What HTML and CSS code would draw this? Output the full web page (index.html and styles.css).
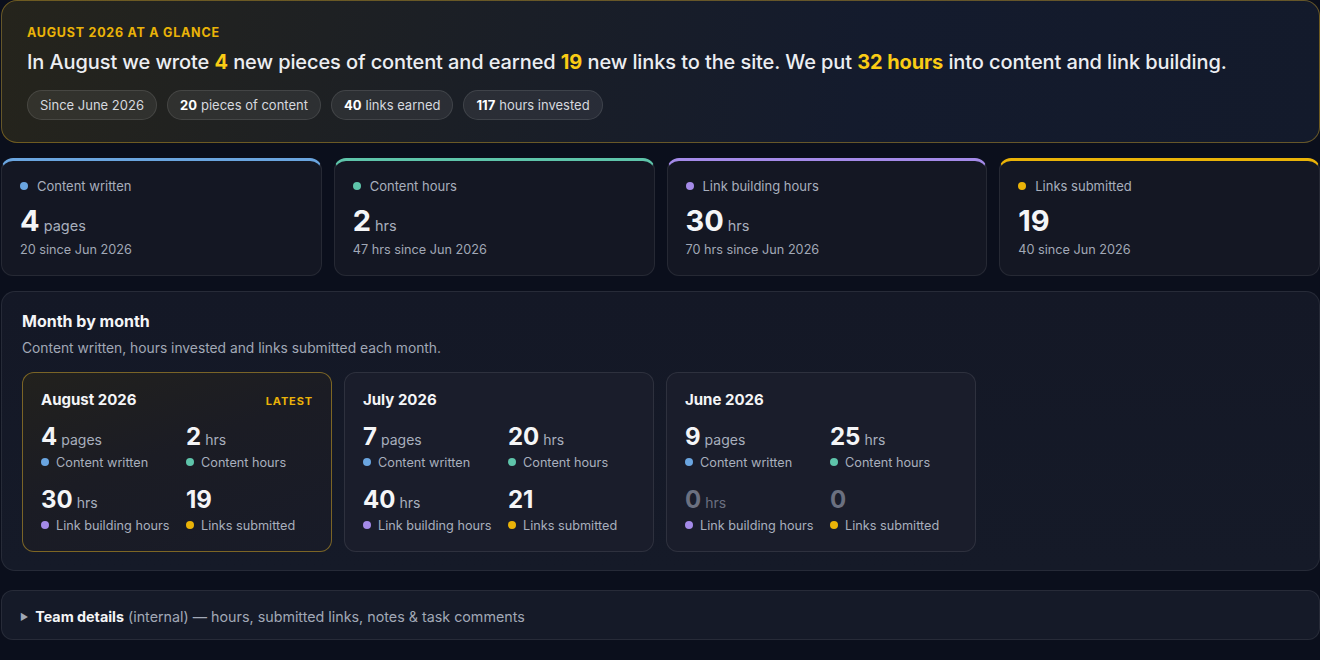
FILE: index.html
```html
<!DOCTYPE html>
<html lang="en">
<head>
<meta charset="utf-8">
<title>August 2026 at a glance</title>
<link rel="stylesheet" href="styles.css">
</head>
<body>
<main class="page">
  <section class="hero">
    <div class="eyebrow">August 2026 at a glance</div>
    <p class="summary">In August we wrote <b>4</b> new pieces of content and earned <b>19</b> new links to the site. We put <b>32 hours</b> into content and link building.</p>
    <div class="pills">
      <span class="pill">Since June 2026</span>
      <span class="pill"><b>20</b> pieces of content</span>
      <span class="pill"><b>40</b> links earned</span>
      <span class="pill"><b>117</b> hours invested</span>
    </div>
  </section>

  <section class="stats">
    <div class="stat blue">
      <div class="stat-label"><i class="dot"></i>Content written</div>
      <div class="stat-value">4<span class="unit">pages</span></div>
      <div class="stat-sub">20 since Jun 2026</div>
    </div>
    <div class="stat teal">
      <div class="stat-label"><i class="dot"></i>Content hours</div>
      <div class="stat-value">2<span class="unit">hrs</span></div>
      <div class="stat-sub">47 hrs since Jun 2026</div>
    </div>
    <div class="stat purple">
      <div class="stat-label"><i class="dot"></i>Link building hours</div>
      <div class="stat-value">30<span class="unit">hrs</span></div>
      <div class="stat-sub">70 hrs since Jun 2026</div>
    </div>
    <div class="stat yellow">
      <div class="stat-label"><i class="dot"></i>Links submitted</div>
      <div class="stat-value">19</div>
      <div class="stat-sub">40 since Jun 2026</div>
    </div>
  </section>

  <section class="months">
    <h2 class="months-title">Month by month</h2>
    <p class="months-sub">Content written, hours invested and links submitted each month.</p>
    <div class="month-grid">
      <div class="month latest">
        <div class="month-head"><span class="month-name">August 2026</span><span class="badge">Latest</span></div>
        <div class="metrics">
          <div class="metric"><div class="m-val">4<span class="unit">pages</span></div><div class="m-label blue"><i class="dot"></i>Content written</div></div>
          <div class="metric"><div class="m-val">2<span class="unit">hrs</span></div><div class="m-label teal"><i class="dot"></i>Content hours</div></div>
          <div class="metric"><div class="m-val">30<span class="unit">hrs</span></div><div class="m-label purple"><i class="dot"></i>Link building hours</div></div>
          <div class="metric"><div class="m-val">19</div><div class="m-label yellow"><i class="dot"></i>Links submitted</div></div>
        </div>
      </div>
      <div class="month">
        <div class="month-head"><span class="month-name">July 2026</span></div>
        <div class="metrics">
          <div class="metric"><div class="m-val">7<span class="unit">pages</span></div><div class="m-label blue"><i class="dot"></i>Content written</div></div>
          <div class="metric"><div class="m-val">20<span class="unit">hrs</span></div><div class="m-label teal"><i class="dot"></i>Content hours</div></div>
          <div class="metric"><div class="m-val">40<span class="unit">hrs</span></div><div class="m-label purple"><i class="dot"></i>Link building hours</div></div>
          <div class="metric"><div class="m-val">21</div><div class="m-label yellow"><i class="dot"></i>Links submitted</div></div>
        </div>
      </div>
      <div class="month">
        <div class="month-head"><span class="month-name">June 2026</span></div>
        <div class="metrics">
          <div class="metric"><div class="m-val">9<span class="unit">pages</span></div><div class="m-label blue"><i class="dot"></i>Content written</div></div>
          <div class="metric"><div class="m-val">25<span class="unit">hrs</span></div><div class="m-label teal"><i class="dot"></i>Content hours</div></div>
          <div class="metric"><div class="m-val zero">0<span class="unit">hrs</span></div><div class="m-label purple"><i class="dot"></i>Link building hours</div></div>
          <div class="metric"><div class="m-val zero">0</div><div class="m-label yellow"><i class="dot"></i>Links submitted</div></div>
        </div>
      </div>
    </div>
  </section>

  <details class="team">
    <summary><span class="tri">&#9654;</span><b>Team details</b> (internal) — hours, submitted links, notes &amp; task comments</summary>
  </details>
</main>
</body>
</html>
```

FILE: styles.css
```css
* { box-sizing: border-box; }
html, body { margin: 0; padding: 0; }
body {
  background: #0b0f1c;
  font-family: Inter, "Noto Sans", sans-serif;
  color: #e5e7eb;
  overflow: hidden;
}
.page {
  width: 1319px;
  margin-left: 1px;
  display: flex;
  flex-direction: column;
}

/* hero */
.hero {
  height: 143px;
  padding: 24px 25px 0;
  border: 1px solid rgba(202, 160, 40, 0.45);
  border-radius: 16px;
  background: linear-gradient(100deg, #25241c 0%, #1b1f26 35%, #141b2d 65%, #131a2b 100%);
}
.eyebrow {
  font-size: 12.5px;
  font-weight: 700;
  letter-spacing: 0.06em;
  text-transform: uppercase;
  color: #eab308;
  line-height: 16px;
}
.summary {
  margin: 7px 0 0;
  font-size: 20px;
  font-weight: 500;
  line-height: 28px;
  color: #eceef2;
  letter-spacing: -0.1px;
}
.summary b { color: #facc15; font-weight: 700; }
.pills { display: flex; gap: 10px; margin-top: 14px; }
.pill {
  height: 30px;
  padding: 0 12px;
  display: inline-flex;
  align-items: center;
  border-radius: 999px;
  background: rgba(255, 255, 255, 0.07);
  border: 1px solid rgba(255, 255, 255, 0.1);
  font-size: 13px;
  color: #d6d9df;
}
.pill b { color: #fff; font-weight: 700; margin-right: 4px; }

/* stats */
.stats {
  display: grid;
  grid-template-columns: repeat(4, 1fr);
  gap: 12px;
  margin-top: 15px;
}
.stat {
  height: 118px;
  padding: 17px 18px 0;
  border-radius: 12px;
  border: 1px solid rgba(255, 255, 255, 0.08);
  border-top: 3px solid;
  background: #141723;
}
.stat.blue { border-top-color: #6aa5e0; }
.stat.teal { border-top-color: #5ec4aa; }
.stat.purple { border-top-color: #a48ae8; }
.stat.yellow { border-top-color: #eab308; }
.dot {
  display: inline-block;
  width: 8px; height: 8px;
  border-radius: 50%;
  margin-right: 9px;
  vertical-align: 1px;
}
.blue .dot { background: #6aa5e0; }
.teal .dot { background: #5ec4aa; }
.purple .dot { background: #a48ae8; }
.yellow .dot { background: #eab308; }
.stat-label { font-size: 13px; color: #a8afbd; line-height: 16px; }
.stat-value {
  display: flex;
  align-items: baseline;
  margin-top: 10px;
  font-size: 29px;
  font-weight: 700;
  color: #f4f5f7;
  line-height: 34px;
  height: 34px;
}
.unit { font-size: 14.5px; font-weight: 400; color: #a8afbd; margin-left: 4px; line-height: 1; }
.stat-sub { font-size: 12.7px; color: #a1a8b6; line-height: 16px; margin-top: 4px; }

/* months */
.months {
  margin-top: 15px;
  height: 280px;
  padding: 19px 20px 0;
  border-radius: 14px;
  border: 1px solid rgba(255, 255, 255, 0.08);
  background: linear-gradient(180deg, #141826 0%, #151a28 100%);
}
.months-title { margin: 0; font-size: 16px; font-weight: 700; color: #f4f5f7; line-height: 20px; }
.months-sub { margin: 7px 0 0; font-size: 13.8px; color: #a1a8b6; line-height: 20px; }
.month-grid {
  display: grid;
  grid-template-columns: repeat(3, 310px);
  gap: 12px;
  margin-top: 14px;
}
.month {
  height: 180px;
  padding: 17px 18px 0;
  border-radius: 12px;
  border: 1px solid rgba(255, 255, 255, 0.09);
  background: #1a1d2b;
}
.month.latest {
  border-color: rgba(202, 160, 40, 0.55);
  background: linear-gradient(160deg, #22211d 0%, #1b1c24 45%, #181b28 100%);
}
.month-head { display: flex; justify-content: space-between; align-items: baseline; }
.month-name { font-size: 15px; font-weight: 700; color: #f4f5f7; line-height: 20px; }
.badge {
  font-size: 11px;
  font-weight: 700;
  letter-spacing: 0.08em;
  text-transform: uppercase;
  color: #eab308;
}
.metrics {
  display: grid;
  grid-template-columns: 129px 129px;
  column-gap: 16px;
  row-gap: 14px;
  margin-top: 12px;
}
.m-val {
  display: flex;
  align-items: baseline;
  font-size: 24px;
  font-weight: 700;
  color: #f4f5f7;
  line-height: 30px;
  height: 30px;
}
.m-val .unit { font-size: 14px; margin-left: 4px; }
.m-val.zero { color: #6b7080; }
.m-val.zero .unit { color: #6b7080; }
.m-label { font-size: 12.7px; color: #a8afbd; line-height: 16px; margin-top: 3px; white-space: nowrap; }
.m-label .dot { margin-right: 7px; }

/* team */
.team {
  margin-top: 19px;
  height: 50px;
  border-radius: 12px;
  border: 1px solid rgba(255, 255, 255, 0.08);
  background: #151a28;
}
.team summary {
  list-style: none;
  padding: 17px 18px 0;
  font-size: 14.3px;
  line-height: 18px;
  color: #a1a8b6;
}
.team summary::-webkit-details-marker { display: none; }
.team summary b { color: #f4f5f7; font-weight: 700; }
.tri { font-size: 9px; color: #a1a8b6; margin-right: 7px; vertical-align: 2px; }
```
